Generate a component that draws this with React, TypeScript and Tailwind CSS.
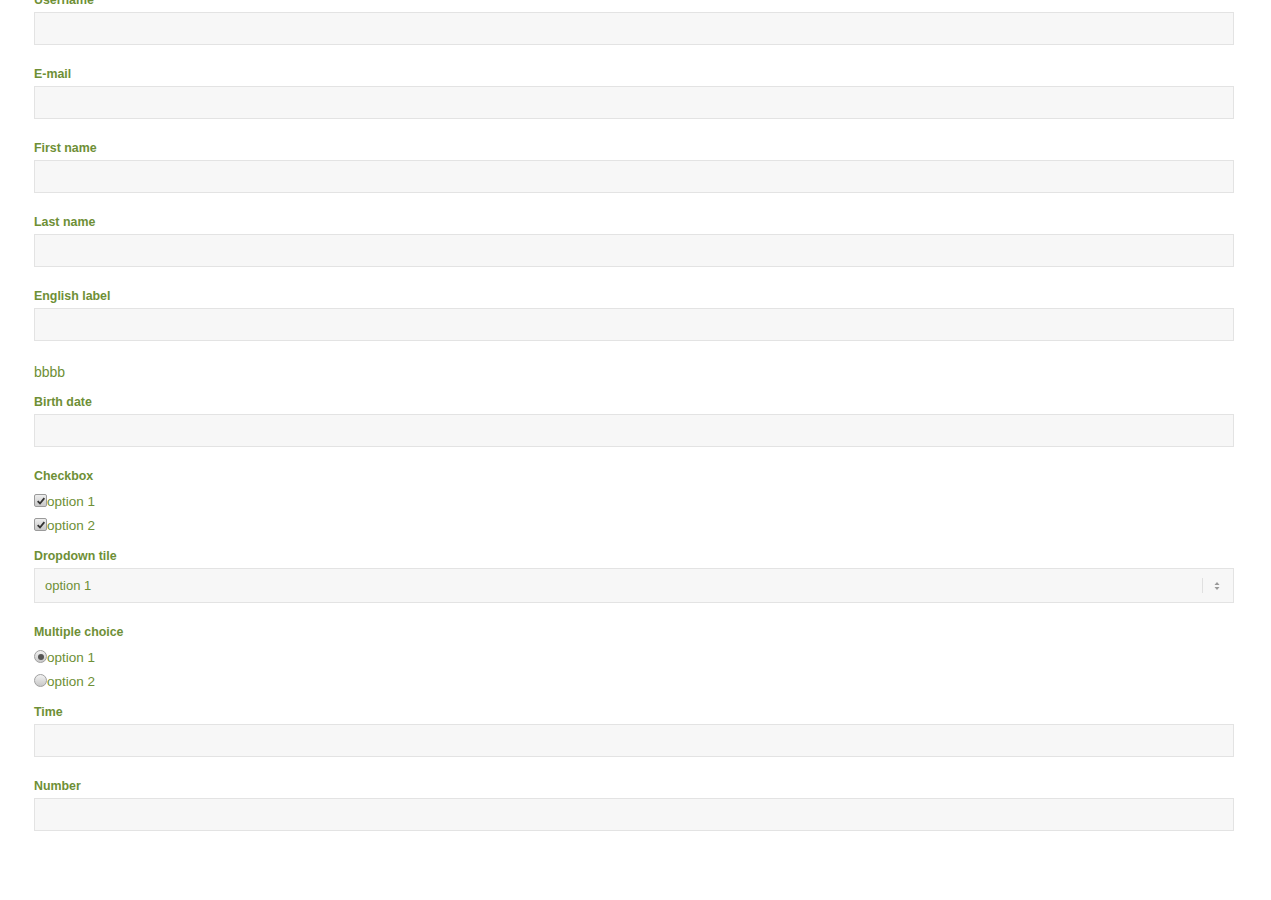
import React from "react";

const labelCls =
  "block text-[12.4px] font-bold leading-[17px] mb-[3px] text-[#6e8f36]";
const inputCls =
  "block w-full h-[33px] bg-[#f7f7f7] border border-[#e3e3e3] px-2 text-[13px] outline-none";

const TextField = ({ label }: { label: string }) => (
  <div className="mb-[21px]">
    <label className={labelCls}>{label}</label>
    <input type="text" className={inputCls} />
  </div>
);

const CheckBox = ({ checked }: { checked?: boolean }) => (
  <span className="inline-flex items-center justify-center w-[13px] h-[13px] -mt-[3px] rounded-[2px] border border-[#9a9a9a] bg-gradient-to-b from-[#eeeeee] to-[#c8c8c8]">
    {checked && (
      <svg viewBox="0 0 12 12" className="w-[10px] h-[10px]">
        <path d="M2 6.2 L4.8 9 L10 2.6" fill="none" stroke="#333" strokeWidth="2.2" />
      </svg>
    )}
  </span>
);

const Radio = ({ checked }: { checked?: boolean }) => (
  <span className="inline-flex items-center justify-center w-[13px] h-[13px] -mt-[3px] rounded-full border border-[#a0a0a0] bg-gradient-to-b from-[#f2f2f2] to-[#c8c8c8]">
    {checked && <span className="w-[6px] h-[6px] rounded-full bg-[#555]" />}
  </span>
);

const optionRow = "flex items-center h-6 text-[13.5px] text-[#6e8f36]";

export default function App() {
  return (
    <div
      className="min-h-[900px] bg-white px-[34px] pt-0 w-full"
      style={{ fontFamily: '"Liberation Sans", Arial, sans-serif' }}
    >
      <div className="w-[1200px] -mt-[8px]">
        <TextField label="Username" />
        <TextField label="E-mail" />
        <TextField label="First name" />
        <TextField label="Last name" />
        <TextField label="English label" />

        <p className="text-[14px] leading-5 text-[#6e8f36] mb-3">bbbb</p>

        <TextField label="Birth date" />

        <div className="mb-[10px]">
          <label className={labelCls}>Checkbox</label>
          <div className="pt-[2px]">
            <div className={optionRow}>
              <CheckBox checked />
              <span>option 1</span>
            </div>
            <div className={optionRow}>
              <CheckBox checked />
              <span>option 2</span>
            </div>
          </div>
        </div>

        <div className="mb-[21px]">
          <label className={labelCls}>Dropdown tile</label>
          <div className="relative h-[35px] bg-[#f7f7f7] border border-[#e3e3e3] flex items-center">
            <span className="pl-[10px] text-[13px] text-[#6e8f36]">option 1</span>
            <span className="absolute right-[30px] top-[9px] h-[15px] w-px bg-[#e0e0e0]" />
            <svg viewBox="0 0 8 12" className="absolute right-[12px] top-[11px] w-[8px] h-[12px]">
              <path d="M1.5 5 L4 2 L6.5 5 Z" fill="#999" />
              <path d="M1.5 7 L4 10 L6.5 7 Z" fill="#999" />
            </svg>
          </div>
        </div>

        <div className="mb-[10px]">
          <label className={labelCls}>Multiple choice</label>
          <div className="pt-[2px]">
            <div className={optionRow}>
              <Radio checked />
              <span>option 1</span>
            </div>
            <div className={optionRow}>
              <Radio />
              <span>option 2</span>
            </div>
          </div>
        </div>

        <TextField label="Time" />
        <TextField label="Number" />
      </div>
    </div>
  );
}
